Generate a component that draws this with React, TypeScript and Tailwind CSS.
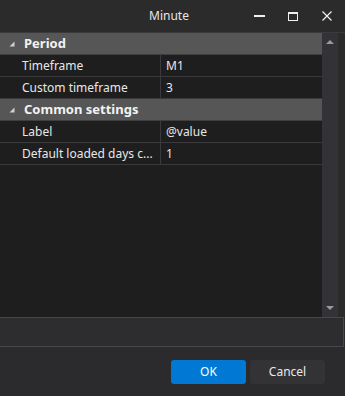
import React from 'react';

type Row = { label: string; value: string };
type Section = { title: string; rows: Row[] };

const sections: Section[] = [
  {
    title: 'Period',
    rows: [
      { label: 'Timeframe', value: 'M1' },
      { label: 'Custom timeframe', value: '3' },
    ],
  },
  {
    title: 'Common settings',
    rows: [
      { label: 'Label', value: '@value' },
      { label: 'Default loaded days c...', value: '1' },
    ],
  },
];

function Expander() {
  return (
    <svg width="6" height="6" viewBox="0 0 6 6" className="shrink-0">
      <polygon points="5.5,0.5 5.5,5.5 0.5,5.5" fill="#d0d0d0" />
    </svg>
  );
}

function TitleBar() {
  return (
    <div className="relative flex h-[32px] items-center bg-[#2b2b2b]">
      <div className="flex-1 pr-[7px] text-center text-[12px] text-[#e6e6e6]">Minute</div>
      <div className="absolute right-0 top-0 flex h-[32px] items-center pr-[1px]">
        <div className="flex h-[32px] w-[34px] items-center justify-center">
          <div className="h-[2px] w-[11px] bg-[#f0f0f0]" />
        </div>
        <div className="flex h-[32px] w-[34px] items-center justify-center">
          <div className="h-[9px] w-[10px] border border-t-[2px] border-[#f0f0f0]" />
        </div>
        <div className="flex h-[32px] w-[34px] items-center justify-center">
          <svg width="10" height="10" viewBox="0 0 10 10">
            <path d="M0.5 0.5 L9.5 9.5 M9.5 0.5 L0.5 9.5" stroke="#f0f0f0" strokeWidth="1.2" />
          </svg>
        </div>
      </div>
    </div>
  );
}

function PropertyGrid() {
  return (
    <div className="flex h-[285px] border-t border-[#3a3a3d]">
      <div className="w-[322px] bg-[#1e1e1e]">
        {sections.map((s) => (
          <div key={s.title}>
            <div className="flex h-[22px] items-center gap-[9px] border-b border-[#3f3f3f] bg-[#565656] pl-[9px]">
              <Expander />
              <span className="text-[13px] font-bold text-[#f2f2f2]">{s.title}</span>
            </div>
            {s.rows.map((r) => (
              <div key={r.label} className="flex h-[22px] border-b border-[#3a3a3d] text-[12px] text-[#e8e8e8]">
                <div className="flex w-[161px] items-center whitespace-nowrap border-r border-[#3a3a3d] pl-[22px]">
                  {r.label}
                </div>
                <div className="flex flex-1 items-center pl-[5px]">{r.value}</div>
              </div>
            ))}
          </div>
        ))}
      </div>
      <div className="flex w-[16px] flex-col items-center justify-between bg-[#333337] py-[7px]">
        <svg width="8" height="4" viewBox="0 0 8 4">
          <polygon points="0,4 4,0 8,4" fill="#9a9a9a" />
        </svg>
        <svg width="8" height="4" viewBox="0 0 8 4">
          <polygon points="0,0 8,0 4,4" fill="#9a9a9a" />
        </svg>
      </div>
      <div className="flex-1 bg-[#2b2b2b]" />
    </div>
  );
}

export default function App() {
  return (
    <div
      className="flex h-[396px] w-[345px] flex-col bg-[#2b2b2d]"
      style={{ fontFamily: '"Noto Sans", "Open Sans", sans-serif' }}
    >
      <TitleBar />
      <PropertyGrid />
      <div className="flex">
        <div className="h-[30px] w-[344px] border-y border-r border-[#48484c] bg-[#2d2d30]" />
      </div>
      <div className="flex flex-1 items-center justify-end gap-[4px] pr-[20px]">
        <button className="h-[24px] w-[75px] rounded-[3px] bg-[#0078d4] text-[12px] text-white">OK</button>
        <button className="h-[24px] w-[75px] rounded-[3px] bg-[#333336] text-[12px] text-[#e8e8e8]">Cancel</button>
      </div>
    </div>
  );
}
